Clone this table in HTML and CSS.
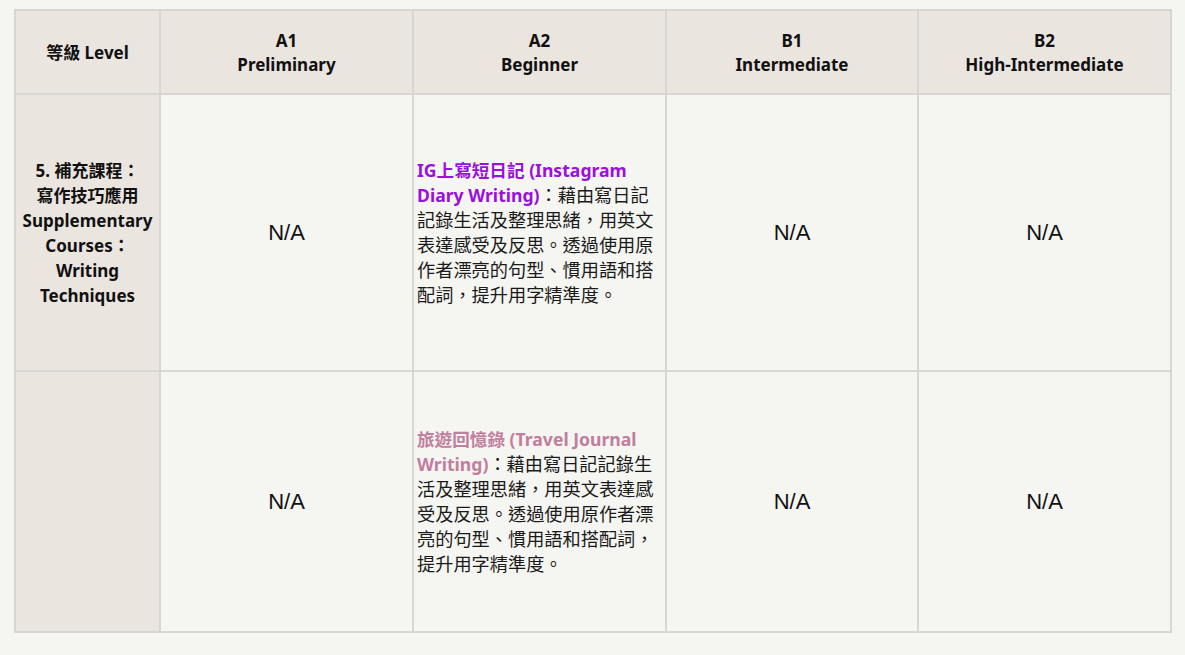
FILE: index.html
```html
<!DOCTYPE html>
<html lang="zh-Hant">
<head>
<meta charset="utf-8">
<title>Levels</title>
<link rel="stylesheet" href="styles.css">
</head>
<body>
<table class="levels">
  <colgroup>
    <col class="c-first">
    <col class="c-lvl">
    <col class="c-lvl">
    <col class="c-lvl c-narrow">
    <col class="c-lvl">
  </colgroup>
  <thead>
    <tr class="row-head">
      <th class="side">等級 Level</th>
      <th>A1<br>Preliminary</th>
      <th>A2<br>Beginner</th>
      <th>B1<br>Intermediate</th>
      <th>B2<br>High-Intermediate</th>
    </tr>
  </thead>
  <tbody>
    <tr class="row-1">
      <th class="side">5. 補充課程：<br>寫作技巧應用<br>Supplementary<br>Courses：<br>Writing<br>Techniques</th>
      <td class="na">N/A</td>
      <td class="desc"><span class="t-purple">IG上寫短日記 (Instagram Diary Writing)</span>：藉由寫日記記錄生活及整理思緒，用英文表達感受及反思。透過使用原作者漂亮的句型、慣用語和搭配詞，提升用字精準度。</td>
      <td class="na">N/A</td>
      <td class="na">N/A</td>
    </tr>
    <tr class="row-2">
      <th class="side"></th>
      <td class="na">N/A</td>
      <td class="desc"><span class="t-mauve">旅遊回憶錄 (Travel Journal Writing)</span>：藉由寫日記記錄生活及整理思緒，用英文表達感受及反思。透過使用原作者漂亮的句型、慣用語和搭配詞，提升用字精準度。</td>
      <td class="na">N/A</td>
      <td class="na">N/A</td>
    </tr>
  </tbody>
</table>
</body>
</html>
```
FILE: styles.css
```css
html, body {
  margin: 0;
  padding: 0;
  background: #f5f5f1;
}
body {
  padding: 9px 14px;
  font-family: "Noto Sans", "Noto Sans CJK TC", sans-serif;
  color: #111;
}
.levels {
  border-collapse: collapse;
  table-layout: fixed;
  width: 1156px;
  background: #f5f5f1;
}
.c-first { width: 145px; }
.c-lvl { width: 253px; }
.c-lvl.c-narrow { width: 252px; }
.levels th, .levels td {
  border: 2px solid #d8d6d3;
  padding: 0 3px;
  vertical-align: middle;
}
.levels th {
  font-weight: 700;
  font-size: 17px;
  line-height: 25px;
  text-align: center;
}
.row-head th {
  background: #ebe5e0;
  height: 80px;
  line-height: 24px;
  padding-top: 2px;
}
.side {
  background: #ebe5e0;
}
.row-1 { height: 277px; }
.row-2 { height: 261px; }
.na {
  font-family: "Liberation Sans", Arial, sans-serif;
  font-size: 22px;
  text-align: center;
  color: #111;
  padding-top: 1px !important;
}
.desc {
  font-size: 18.2px;
  line-height: 25px;
  padding: 0 2px 0 2px;
  text-align: left;
  color: #1a1a1a;
}
.t-purple {
  color: #9a10dc;
  font-weight: 700;
  font-size: 17.6px;
}
.t-mauve {
  color: #c07f9f;
  font-weight: 700;
  font-size: 17.6px;
}
```
